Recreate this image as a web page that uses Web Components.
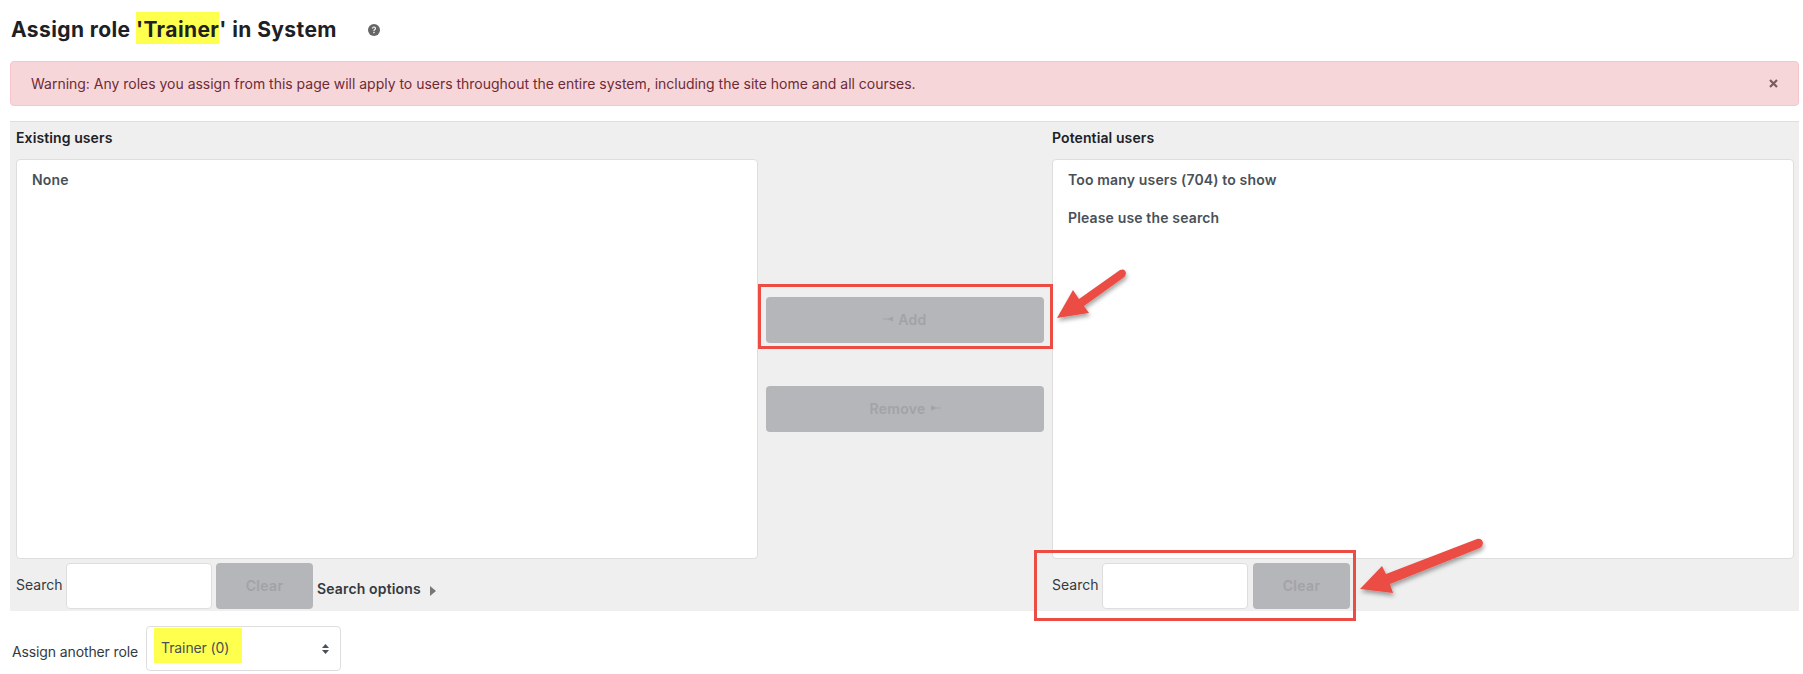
<!DOCTYPE html>
<html>
<head>
<meta charset="utf-8">
<title>Assign role</title>
<style>
html, body { margin: 0; background: #fff; }
body { font-family: "Inter", "Liberation Sans", sans-serif; font-size: 14px; color: #1d2125; }
</style>
</head>
<body>
<role-page></role-page>

<script>
const FONT = '"Inter", "Liberation Sans", sans-serif';

//simple disabled grey button
class GreyBtn extends HTMLElement {
  constructor(){
    super();
    this.attachShadow({mode: 'open'});
    this.shadowRoot.innerHTML = `
    <style>
      :host { display: flex; align-items: center; justify-content: center; gap: 5px; height: 46px; box-sizing: border-box; padding-bottom: 2px; background: #b5b6b9; border-radius: 4px; color: #a2a3a6; font: 600 14px ${FONT}; letter-spacing: .3px; }
    </style>
    <slot></slot>`;
  }
}
customElements.define('grey-btn', GreyBtn);

//heading with the little help icon
class PageHeading extends HTMLElement {
  constructor(){
    super();
    this.attachShadow({mode: 'open'});
    this.shadowRoot.innerHTML = `
    <style>
      :host { display: flex; align-items: flex-start; height: 61px; box-sizing: border-box; padding-left: 1px; }
      h2 { margin: 12px 0 0; font: 700 21px/28px ${FONT}; color: #1d2125; letter-spacing: .4px; }
      mark { display: inline-block; height: 32px; box-sizing: border-box; padding-top: 4px; background: #ffff4d; color: inherit; }
      svg { margin: 24px 0 0 31px; }
    </style>
    <h2>Assign role <mark>'Trainer</mark>' in System</h2>
    <svg width="12" height="12" viewBox="0 0 12 12"><circle cx="6" cy="6" r="6" fill="#666"/><path d="M4 4.600c0-1.200.9-2 2-2s2 .7 2 1.800c0 1.500-1.500 1.300-1.500 2.600H5.400c0-1.900 1.500-1.700 1.500-2.600 0-.5-.4-.8-.9-.8s-.9.400-.9 1z" fill="#fff"/><rect x="5.300" y="7.800" width="1.300" height="1.400" fill="#fff"/></svg>`;
  }
}
customElements.define('page-heading', PageHeading);

//pink warning box
class WarnAlert extends HTMLElement {
  constructor(){
    super();
    this.attachShadow({mode: 'open'});
    this.shadowRoot.innerHTML = `
    <style>
      :host { display: flex; align-items: center; justify-content: space-between; height: 45px; box-sizing: border-box; padding: 0 20px 0 20px; background: #f7d6d9; border: 1px solid #f5c6cb; border-radius: 4px; color: #6e2b35; font: 400 14px ${FONT}; letter-spacing: -.015px; }
      svg { display: block; }
    </style>
    <span><slot></slot></span>
    <svg width="9" height="9" viewBox="0 0 9 9"><path d="M1 1l7 7M8 1L1 8" stroke="#7d5a60" stroke-width="2.200"/></svg>`;
  }
}
customElements.define('warn-alert', WarnAlert);

//white box listing users
class UserList extends HTMLElement {
  constructor(){
    super();
    this.attachShadow({mode: 'open'});
    this.shadowRoot.innerHTML = `
    <style>
      :host { display: block; height: 400px; box-sizing: border-box; padding: 12px 15px; background: #fff; border: 1px solid #dedede; border-radius: 4px; color: #495057; font: 600 14px/16px ${FONT}; letter-spacing: .15px; }
      ::slotted(div) { margin-bottom: 22px; }
    </style>
    <slot></slot>`;
  }
}
customElements.define('user-list', UserList);

//Search label, input box and Clear button
class SearchRow extends HTMLElement {
  constructor(){
    super();
    this.attachShadow({mode: 'open'});
    this.shadowRoot.innerHTML = `
    <style>
      :host { display: flex; align-items: flex-start; height: 46px; margin-top: 4px; font: 400 14px ${FONT}; color: #343a40; }
      label { width: 50px; line-height: 44px; }
      .box { width: 146px; height: 46px; box-sizing: border-box; background: #fff; border: 1px solid #dedede; border-radius: 4px; margin-right: 4px; }
      :host([wide]) .box { margin-right: 5px; }
      grey-btn { width: 97px; }
      .extra { margin-left: 4px; line-height: 46px; padding-top: 3px; }
    </style>
    <label>Search</label>
    <div class="box"></div>
    <grey-btn>Clear</grey-btn>
    <div class="extra"><slot></slot></div>`;
  }
}
customElements.define('search-row', SearchRow);

//left or right column of the panel
class UserColumn extends HTMLElement {
  constructor(){
    super();
    this.attachShadow({mode: 'open'});
    const wide = this.hasAttribute('wide') ? 'wide' : '';
    this.shadowRoot.innerHTML = `
    <style>
      :host { display: block; }
      .title { height: 37px; font: 600 14px/32px ${FONT}; letter-spacing: .1px; color: #1d2125; }
    </style>
    <div class="title">${this.getAttribute('title-text')}</div>
    <user-list><slot></slot></user-list>
    <search-row ${wide}><slot name="extra"></slot></search-row>`;
  }
}
customElements.define('user-column', UserColumn);

//fake select so the yellow highlight can sit behind the text
class RoleSelect extends HTMLElement {
  constructor(){
    super();
    this.attachShadow({mode: 'open'});
    this.shadowRoot.innerHTML = `
    <style>
      :host { display: flex; align-items: center; justify-content: space-between; width: 195px; height: 45px; box-sizing: border-box; padding: 0 11px 0 7px; border: 1px solid #dedede; border-radius: 4px; background: #fff; font: 400 14px ${FONT}; color: #495057; }
      .hl { display: block; align-self: flex-start; width: 88px; height: 35px; line-height: 30px; margin-top: 1px; box-sizing: border-box; padding: 5px 0 0 7px; background: #ffff4d; }
      svg { display: block; }
    </style>
    <span class="hl"><slot></slot></span>
    <svg width="7" height="10" viewBox="0 0 7 10"><path d="M3.500 0L7 4H0zM3.500 10L0 6h7z" fill="#495057"/></svg>`;
  }
}
customElements.define('role-select', RoleSelect);

//whole page, the red markup is drawn on top at the end
class RolePage extends HTMLElement {
  constructor(){
    super();
    this.attachShadow({mode: 'open'});
    this.shadowRoot.innerHTML = `
    <style>${this.getStyle()}</style>
    <page-heading></page-heading>
    <warn-alert>Warning: Any roles you assign from this page will apply to users throughout the entire system, including the site home and all courses.</warn-alert>
    <div class="panel">
      <user-column title-text="Existing users">
        <div>None</div>
        <span slot="extra" class="opts">Search options <i></i></span>
      </user-column>
      <div class="mid">
        <grey-btn><svg width="10" height="6" viewBox="0 0 10 6"><path d="M10 .5L5 2.400H0V3.600H5L10 5.500z" fill="#a2a3a6"/></svg><span>Add</span></grey-btn>
        <grey-btn class="rm"><span>Remove</span><svg width="10" height="6" viewBox="0 0 10 6"><path d="M0 .5L5 2.400H10V3.600H5L0 5.500z" fill="#a2a3a6"/></svg></grey-btn>
      </div>
      <user-column title-text="Potential users" wide>
        <div>Too many users (704) to show</div>
        <div>Please use the search</div>
      </user-column>
    </div>
    <div class="foot">
      <span>Assign another role</span>
      <role-select>Trainer (0)</role-select>
    </div>
    <svg class="markup" width="1803" height="674" viewBox="0 0 1803 674">
      <defs><filter id="sh" x="-20%" y="-20%" width="140%" height="140%"><feDropShadow dx="1" dy="3" stdDeviation="2" flood-color="#000" flood-opacity=".35"/></filter></defs>
      <rect x="759.500" y="285.500" width="292" height="62" fill="none" stroke="#eb4d45" stroke-width="3"/>
      <rect x="1035.500" y="551.500" width="319" height="68" fill="none" stroke="#eb4d45" stroke-width="3"/>
      <path d="M1057 318L1073 290L1079 299L1120 270Q1125 268 1126 273Q1126 276 1123 278L1084 306L1089 313Z" fill="#eb4d45" filter="url(#sh)"/>
      <path d="M1360 589L1382 566L1386 574L1477 539Q1482 538 1483 543Q1483 546 1480 548L1390 584L1393 593Z" fill="#eb4d45" filter="url(#sh)"/>
    </svg>`;
  }

  getStyle(){
    return `
      :host { display: block; position: relative; width: 1803px; height: 674px; box-sizing: border-box; padding: 0 4px 0 10px; overflow: hidden; }
      .panel { display: grid; grid-template-columns: 742px 294px 742px; margin-top: 15px; padding: 0 5px 0 6px; height: 490px; box-sizing: border-box; background: #efefef; border-top: 1px solid #dedede; }
      .mid { display: flex; flex-direction: column; padding: 175px 8px 0; }
      .mid .rm { margin-top: 43px; }
      .opts { font: 600 14px ${FONT}; letter-spacing: .15px; color: #343a40; white-space: nowrap; }
      .opts i { display: inline-block; margin-left: 5px; border-left: 6px solid #777; border-top: 5px solid transparent; border-bottom: 5px solid transparent; vertical-align: -2px; }
      .foot { display: flex; align-items: center; gap: 8px; margin-top: 15px; padding-left: 2px; font: 400 14px ${FONT}; letter-spacing: -.12px; color: #343a40; }
      .foot span { padding-top: 6px; }
      .markup { position: absolute; left: 0; top: 0; pointer-events: none; }
    `;
  }
}
customElements.define('role-page', RolePage);
</script>
</body>
</html>
